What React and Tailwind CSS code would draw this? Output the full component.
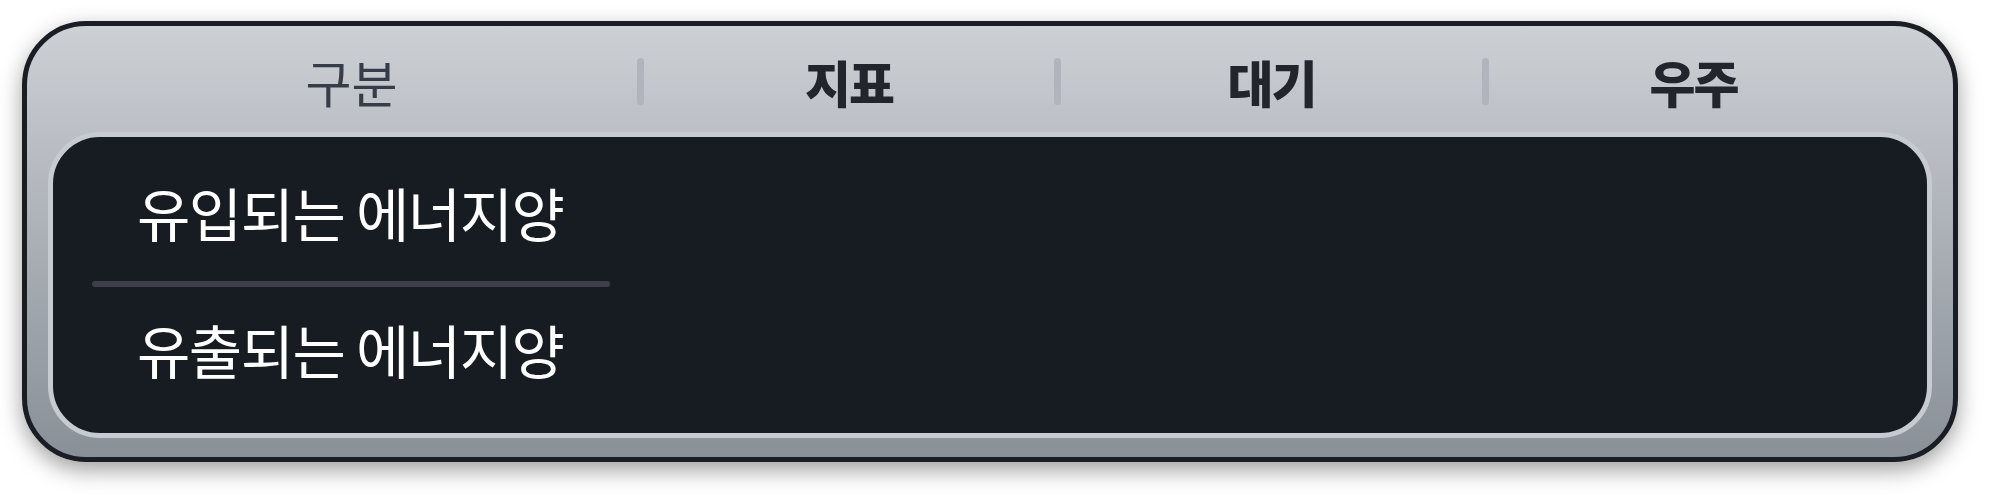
import React from 'react';

const cols = [
  { label: '구분', width: 'w-[589px] pl-[18px]', cls: 'font-normal text-[#363d48]' },
  { label: '지표', width: 'w-[410px]', cls: 'font-black tracking-[-2px] text-[#22262c]' },
  { label: '대기', width: 'w-[421px]', cls: 'font-black tracking-[-2px] text-[#22262c]' },
  { label: '우주', width: 'flex-1 pr-[34px]', cls: 'font-black tracking-[-2px] text-[#22262c]' },
];

function Divider() {
  return <div className="mt-[4px] h-[47px] w-[7px] shrink-0 rounded-full bg-[#b0b5bd]" />;
}

export default function App() {
  return (
    <div
      className="min-h-screen bg-white pl-[22px] pr-[32px] pt-[21px]"
      style={{ fontFamily: '"Noto Sans CJK KR", "Noto Sans", sans-serif' }}
    >
      <div className="rounded-[64px] border-[5px] border-[#1a1e24] bg-linear-to-b from-[#cdd0d5] to-[#899098] px-[21px] pb-[19px] shadow-[0_8px_22px_rgba(0,0,0,0.38)]">
        {/* header */}
        <div className="flex h-[106px] items-center">
          {cols.map((c, i) => (
            <React.Fragment key={c.label}>
              {i > 0 && <Divider />}
              <div className={`${c.width} pt-[4px] text-center text-[50px] leading-none ${c.cls}`}>
                {c.label}
              </div>
            </React.Fragment>
          ))}
        </div>

        {/* body */}
        <div className="h-[306px] rounded-[52px] border-[5px] border-[#c6cad1] bg-[#171c23] pt-[46px]">
          <div className="pl-[84px] text-[58px] leading-none tracking-[-1.5px] text-white">유입되는 에너지양</div>
          <div className="ml-[39px] mt-[40px] h-[6px] w-[518px] rounded-full bg-[#3d3e4a]" />
          <div className="mt-[33px] pl-[84px] text-[58px] leading-none tracking-[-1.5px] text-white">유출되는 에너지양</div>
        </div>
      </div>
    </div>
  );
}
